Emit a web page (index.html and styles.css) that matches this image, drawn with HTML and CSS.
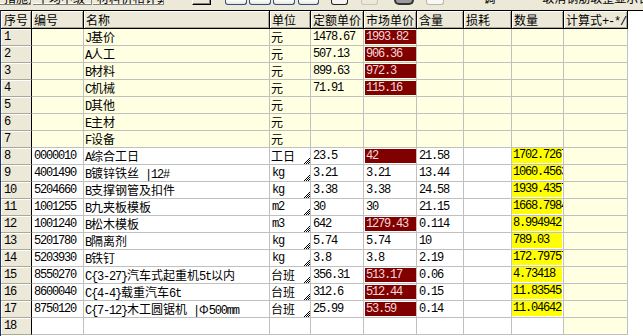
FILE: index.html
```html
<!DOCTYPE html>
<html lang="zh">
<head>
<meta charset="utf-8">
<title>材料表</title>
<link rel="stylesheet" href="styles.css">
</head>
<body>
<div class="tb">
  <div class="tab t1"><span>措施另</span></div>
  <div class="tab t2"><span>平均中级</span></div>
  <div class="tab t3"><span>材料价格计算</span></div>
  <div class="sb"></div>
  <div class="rbt b1"></div><div class="rbt"></div><div class="rbt"></div><div class="rbt b4"></div>
  <div class="ic i1"></div><div class="ic i2"></div><div class="ic i3"></div><div class="ic i4"></div>
  <div class="tt"><span>一 · 调 一 · · 取消钢筋取整显示合计</span></div>
</div>
<div class="sheet">
  <div class="row hd">
    <div class="c rn">序号</div><div class="c">编号</div><div class="c">名称</div><div class="c">单位</div><div class="c">定额单价</div><div class="c">市场单价</div><div class="c">含量</div><div class="c">损耗</div><div class="c">数量</div><div class="c">计算式<span class="m">+-*/</span></div>
  </div>
  <div class="row ly">
    <div class="c rn m">1</div><div class="c"></div><div class="c"><span class="m">J</span>基价</div><div class="c">元</div><div class="c m">1478.67</div><div class="c x m"><span class="rd">1993.82</span></div><div class="c"></div><div class="c"></div><div class="c"></div><div class="c f"></div>
  </div>
  <div class="row ly">
    <div class="c rn m">2</div><div class="c"></div><div class="c"><span class="m">A</span>人工</div><div class="c">元</div><div class="c m">507.13</div><div class="c x m"><span class="rd">906.36</span></div><div class="c"></div><div class="c"></div><div class="c"></div><div class="c f"></div>
  </div>
  <div class="row ly">
    <div class="c rn m">3</div><div class="c"></div><div class="c"><span class="m">B</span>材料</div><div class="c">元</div><div class="c m">899.63</div><div class="c x m"><span class="rd">972.3</span></div><div class="c"></div><div class="c"></div><div class="c"></div><div class="c f"></div>
  </div>
  <div class="row ly">
    <div class="c rn m">4</div><div class="c"></div><div class="c"><span class="m">C</span>机械</div><div class="c">元</div><div class="c m">71.91</div><div class="c x m"><span class="rd">115.16</span></div><div class="c"></div><div class="c"></div><div class="c"></div><div class="c f"></div>
  </div>
  <div class="row ly">
    <div class="c rn m">5</div><div class="c"></div><div class="c"><span class="m">D</span>其他</div><div class="c">元</div><div class="c"></div><div class="c"></div><div class="c"></div><div class="c"></div><div class="c"></div><div class="c f"></div>
  </div>
  <div class="row ly">
    <div class="c rn m">6</div><div class="c"></div><div class="c"><span class="m">E</span>主材</div><div class="c">元</div><div class="c"></div><div class="c"></div><div class="c"></div><div class="c"></div><div class="c"></div><div class="c f"></div>
  </div>
  <div class="row ly">
    <div class="c rn m">7</div><div class="c"></div><div class="c"><span class="m">F</span>设备</div><div class="c">元</div><div class="c"></div><div class="c"></div><div class="c"></div><div class="c"></div><div class="c"></div><div class="c f"></div>
  </div>
  <div class="row">
    <div class="c rn m">8</div><div class="c m">0000010</div><div class="c"><span class="m">A</span>综合工日</div><div class="c u">工日</div><div class="c m">23.5</div><div class="c x m"><span class="rd">42</span></div><div class="c m">21.58</div><div class="c"></div><div class="c x m"><span class="yl">1702.7267</span></div><div class="c f"></div>
  </div>
  <div class="row">
    <div class="c rn m">9</div><div class="c m">4001490</div><div class="c"><span class="m">B</span>镀锌铁丝<span class="m"> |12#</span></div><div class="c u m">kg</div><div class="c m">3.21</div><div class="c m">3.21</div><div class="c m">13.44</div><div class="c"></div><div class="c x m"><span class="yl">1060.4563</span></div><div class="c f"></div>
  </div>
  <div class="row">
    <div class="c rn m">10</div><div class="c m">5204660</div><div class="c"><span class="m">B</span>支撑钢管及扣件</div><div class="c u m">kg</div><div class="c m">3.38</div><div class="c m">3.38</div><div class="c m">24.58</div><div class="c"></div><div class="c x m"><span class="yl">1939.4357</span></div><div class="c f"></div>
  </div>
  <div class="row">
    <div class="c rn m">11</div><div class="c m">1001255</div><div class="c"><span class="m">B</span>九夹板模板</div><div class="c u m">m2</div><div class="c m">30</div><div class="c m">30</div><div class="c m">21.15</div><div class="c"></div><div class="c x m"><span class="yl">1668.7984</span></div><div class="c f"></div>
  </div>
  <div class="row">
    <div class="c rn m">12</div><div class="c m">1001240</div><div class="c"><span class="m">B</span>松木模板</div><div class="c u m">m3</div><div class="c m">642</div><div class="c x m"><span class="rd">1279.43</span></div><div class="c m">0.114</div><div class="c"></div><div class="c x m"><span class="yl">8.994942</span></div><div class="c f"></div>
  </div>
  <div class="row">
    <div class="c rn m">13</div><div class="c m">5201780</div><div class="c"><span class="m">B</span>隔离剂</div><div class="c u m">kg</div><div class="c m">5.74</div><div class="c m">5.74</div><div class="c m">10</div><div class="c"></div><div class="c x m"><span class="yl">789.03</span></div><div class="c f"></div>
  </div>
  <div class="row">
    <div class="c rn m">14</div><div class="c m">5203930</div><div class="c"><span class="m">B</span>铁钉</div><div class="c u m">kg</div><div class="c m">3.8</div><div class="c m">3.8</div><div class="c m">2.19</div><div class="c"></div><div class="c x m"><span class="yl">172.79757</span></div><div class="c f"></div>
  </div>
  <div class="row">
    <div class="c rn m">15</div><div class="c m">8550270</div><div class="c"><span class="m">C{3-27}</span>汽车式起重机<span class="m">5t</span>以内</div><div class="c u">台班</div><div class="c m">356.31</div><div class="c x m"><span class="rd">513.17</span></div><div class="c m">0.06</div><div class="c"></div><div class="c x m"><span class="yl">4.73418</span></div><div class="c f"></div>
  </div>
  <div class="row">
    <div class="c rn m">16</div><div class="c m">8600040</div><div class="c"><span class="m">C{4-4}</span>载重汽车<span class="m">6t</span></div><div class="c u">台班</div><div class="c m">312.6</div><div class="c x m"><span class="rd">512.44</span></div><div class="c m">0.15</div><div class="c"></div><div class="c x m"><span class="yl">11.83545</span></div><div class="c f"></div>
  </div>
  <div class="row">
    <div class="c rn m">17</div><div class="c m">8750120</div><div class="c"><span class="m">C{7-12}</span>木工圆锯机<span class="m"> |</span>Φ<span class="m">500mm</span></div><div class="c u">台班</div><div class="c m">25.99</div><div class="c x m"><span class="rd">53.59</span></div><div class="c m">0.14</div><div class="c"></div><div class="c x m"><span class="yl">11.04642</span></div><div class="c f"></div>
  </div>
  <div class="row">
    <div class="c rn m">18</div><div class="c"></div><div class="c"></div><div class="c"></div><div class="c"></div><div class="c"></div><div class="c"></div><div class="c"></div><div class="c"></div><div class="c f"></div>
  </div>
</div>
</body>
</html>
```
FILE: styles.css
```css
* { box-sizing: border-box; margin: 0; padding: 0; }
html, body { width: 643px; height: 336px; overflow: hidden; }
body {
  background: #fff;
  font-family: "Noto Sans CJK SC", "Liberation Sans", sans-serif;
  font-size: 12px;
  color: #000;
}

/* toolbar remnant */
.tb {
  height: 10px;
  background: #ece9d8;
  display: flex;
  align-items: flex-start;
  overflow: hidden;
}
.tab {
  height: 5px;
  overflow: hidden;
  border-right: 1px solid #808080;
  border-bottom: 1px solid #808080;
  box-shadow: inset 0 -1px 0 #fff;
}
.tab span, .tt span {
  display: block;
  line-height: 12px;
  margin-top: -8px;
  white-space: nowrap;
  padding-left: 4px;
}
.t1 { width: 31px; }
.t2 { width: 59px; margin-left: 2px; }
.t3 { width: 71px; margin-left: 1px; }
.sb {
  width: 19px; height: 5px; margin-left: 28px;
  border-left: 1px solid #fff;
  border-right: 1px solid #000;
  border-bottom: 1px solid #000;
  box-shadow: inset -1px -1px 0 #808080;
}
.rbt {
  width: 22px; height: 5px; margin-left: 2px;
  border: 1px solid #2e4f7e;
  border-top: none;
  border-radius: 0 0 3px 3px;
  background: linear-gradient(#fff, #e6e4dc);
}
.rbt.b1 { margin-left: 14px; }
.rbt.b4 { width: 21px; margin-left: 3px; }
.ic { height: 5px; }
.i1 { width: 17px; margin-left: 12px; border: 1px solid #222; border-top: none; border-radius: 0 0 3px 3px; background: #f4f4f0; }
.i2 { width: 17px; margin-left: 13px; border: 1px solid #c8c6bc; border-top: none; border-radius: 0 0 3px 3px; }
.i3 { width: 20px; margin-left: 16px; border: 2px solid #333; border-top: none; border-radius: 0 0 8px 8px; background: #9a9a9a; }
.i4 { width: 18px; margin-left: 12px; border: 1px solid #b8b6ac; border-top: none; border-radius: 0 0 3px 3px; background: #f8f8f4; }
.tt { margin-left: 6px; height: 5px; overflow: hidden; flex: 1; }
.tt span { padding-left: 4px; }

/* sheet */
.sheet {
  border-top: 1px solid #000;
  border-left: 1px solid #1d3567;
  background: #fff;
  height: 326px;
}
.row {
  display: grid;
  grid-template-columns: 31px 52px 186px 41px 53px 53px 47px 48px 52px 64px;
  height: 17px;
}
.c {
  position: relative;
  border-right: 1px solid #c0c0c0;
  border-bottom: 1px solid #c0c0c0;
  overflow: hidden;
  white-space: nowrap;
  line-height: 16px;
  padding-left: 1px;
}
.m {
  font-family: "Liberation Mono", "DejaVu Sans Mono", monospace;
  font-size: 12px;
  letter-spacing: -1.2px;
}
.c.m { padding-left: 2px; }
.c .m { line-height: 14px; }

.hd { height: 18px; }
.hd .c {
  background: #ece9d8;
  border-right-color: #000;
  border-bottom-color: #000;
  box-shadow: inset 1px 1px 0 #fff, inset -1px -1px 0 #aca899;
  padding-left: 2px;
  line-height: 17px;
}
.hd .c.rn { padding-left: 3px; }

.rn {
  background: #ece9d8;
  border-bottom-color: #aca899;
  box-shadow: inset 1px 1px 0 #fff;
}
.c.rn { border-right-color: #000; padding-left: 3px; }

.ly .c { background: #ffffe1; }
.ly .c.rn { background: #ece9d8; }
.c.f { background: #ffffe1; }

.c.x { padding-left: 0; }
.rd {
  display: block;
  background: #800000;
  color: #f3d9d9;
  margin: 1px 0 1px 1px;
  height: 14px;
  line-height: 14px;
  padding-left: 1px;
}
.yl {
  display: block;
  background: #ffff00;
  margin: 0 1px 1px 0;
  height: 15px;
  line-height: 15px;
  padding-left: 1px;
}

.u::after {
  content: "";
  position: absolute;
  right: 0;
  bottom: 0;
  width: 7px;
  height: 7px;
  background: repeating-conic-gradient(#000 0 25%, #fff 0 50%) 0 0 / 2px 2px;
  clip-path: polygon(100% 0, 100% 100%, 0 100%);
}
```
